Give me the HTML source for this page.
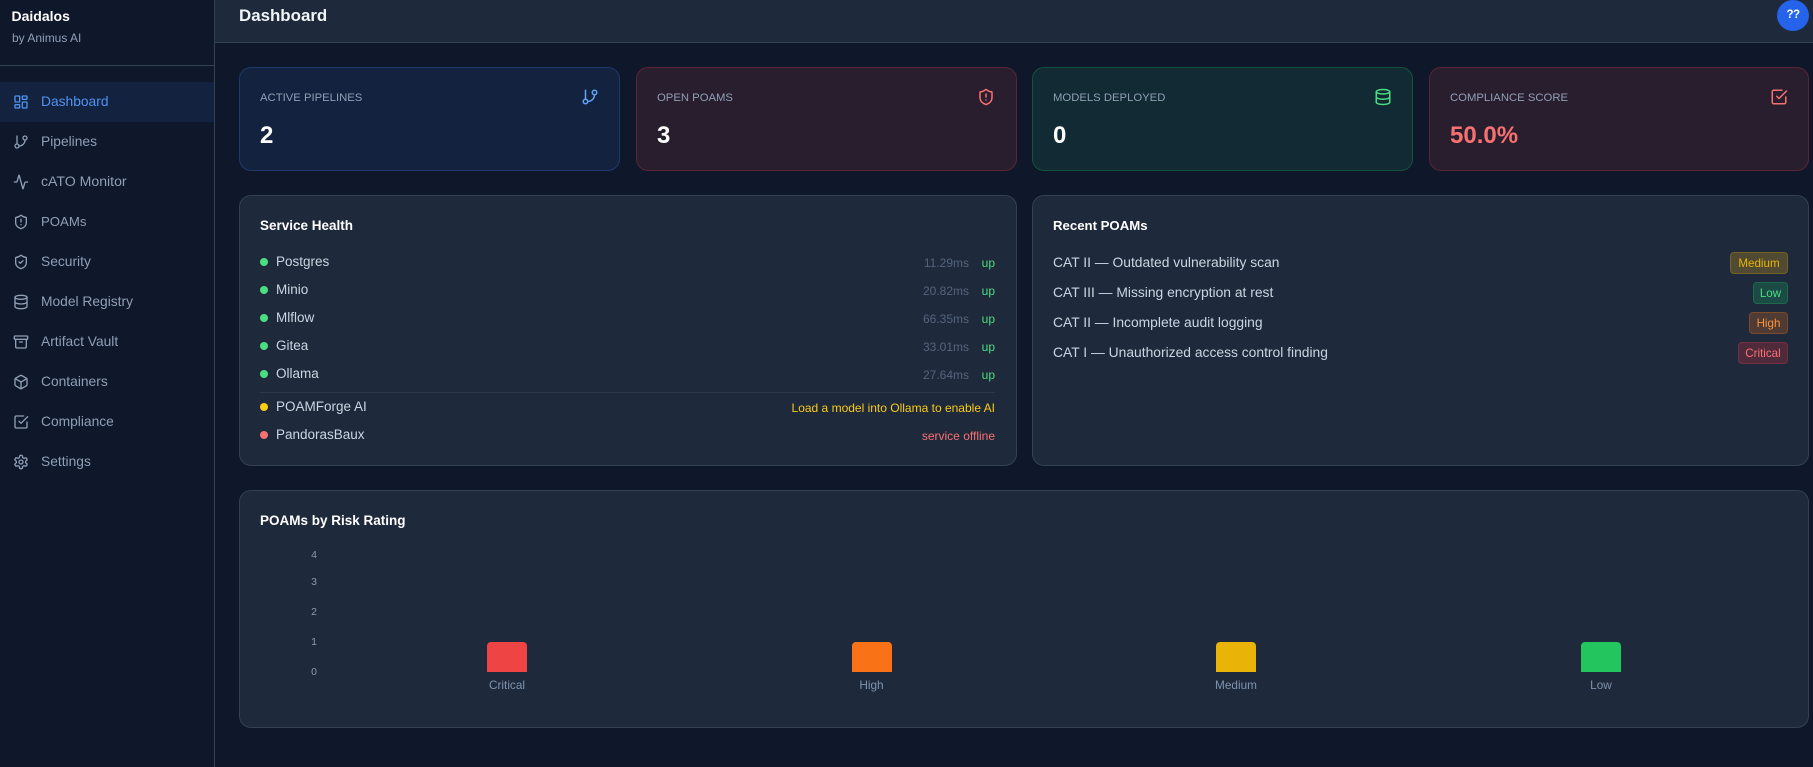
<!DOCTYPE html>
<html lang="en"><head><meta charset="utf-8"><title>Daidalos Dashboard</title>
<style>
*{box-sizing:border-box;margin:0;padding:0}
html,body{width:1813px;height:767px;overflow:hidden;background:#0f172a;font-family:"Liberation Sans",Arial,sans-serif}
.a{position:absolute;white-space:nowrap}
.t{position:absolute;white-space:nowrap;line-height:20px;height:20px}
svg{position:absolute;fill:none;stroke:currentColor;stroke-width:2;stroke-linecap:round;stroke-linejoin:round}
.sb{position:absolute;left:0;top:0;width:215px;height:767px;background:#0f172a;border-right:1px solid #334155}
.nav{position:absolute;left:0;width:214px;height:40px;color:#8f9fb6}
.nav .l{position:absolute;left:41px;top:10px;font-size:13.8px;line-height:20px}
.nav svg{left:13px;top:12px}
.nav.on{background:#13233f;color:#4f92f0}
.card{position:absolute;border-radius:12px;border:1px solid #334155;background:#1e293b}
.s{top:67px;height:104px;width:381px}
.s .lb{position:absolute;left:20px;top:20px;font-size:11.3px;line-height:20px;color:#8f9fb6;white-space:nowrap}
.s .v{position:absolute;left:20px;top:52px;font-size:24px;line-height:32px;font-weight:700;color:#fff}
.s svg{left:341px;top:20px}
.h3{font-size:13.5px;font-weight:700;color:#fff}
.dot{position:absolute;width:8px;height:8px;border-radius:50%;left:260px}
.nm{font-size:13.5px;color:#cbd5e1;left:276px}
.ms{font-size:12px;color:#55647d;right:844px}
.up{font-size:12px;color:#4ade80;right:818px}
.rp{font-size:13.85px;color:#cbd5e1;left:1053px}
.b{position:absolute;left:auto;right:25px;height:22px;border-radius:4px;border:1px solid;font-size:11.6px;line-height:22px;text-align:center;white-space:nowrap}
.bar{position:absolute;top:642px;width:40px;height:30px;border-radius:4px 4px 0 0}
.tk{position:absolute;font-size:10.5px;line-height:14px;color:#8a9bb3;width:12px;text-align:center;left:308px}
.xl{position:absolute;top:678px;font-size:11.8px;line-height:14px;color:#7f93ad;width:100px;text-align:center}
</style></head><body>

<div class="a" style="left:215px;top:0;width:1598px;height:43px;background:#1e293b;border-bottom:1px solid #334155"></div>
<div class="t" style="left:239px;top:5px;font-size:16.9px;line-height:22px;height:22px;font-weight:700;color:#f1f5f9">Dashboard</div>
<div class="a" style="left:1777px;top:0;width:32px;height:31px;border-radius:50%;background:#2563eb;color:#fff;font-size:11.5px;font-weight:700;line-height:31px;text-align:center;letter-spacing:-.5px">??</div>

<div class="sb">
<div class="a" style="left:0;top:65px;width:214px;height:1px;background:#334155"></div>
<div class="t" style="left:11.5px;top:6px;font-size:14px;font-weight:700;color:#fff">Daidalos</div>
<div class="t" style="left:12px;top:28px;font-size:12px;color:#8f9fb6">by Animus AI</div>

<div class="nav on" style="top:82px"><svg width="16" height="16" viewBox="0 0 24 24"><rect x="3" y="3" width="7" height="9" rx="1"/><rect x="14" y="3" width="7" height="5" rx="1"/><rect x="14" y="12" width="7" height="9" rx="1"/><rect x="3" y="16" width="7" height="5" rx="1"/></svg><span class="l">Dashboard</span></div>
<div class="nav" style="top:122px"><svg width="16" height="16" viewBox="0 0 24 24"><line x1="6" y1="3" x2="6" y2="15"/><circle cx="18" cy="6" r="3"/><circle cx="6" cy="18" r="3"/><path d="M18 9a9 9 0 0 1-9 9"/></svg><span class="l">Pipelines</span></div>
<div class="nav" style="top:162px"><svg width="16" height="16" viewBox="0 0 24 24"><path d="M22 12h-2.48a2 2 0 0 0-1.93 1.46l-2.35 8.36a.25.25 0 0 1-.48 0L9.24 2.18a.25.25 0 0 0-.48 0l-2.35 8.36A2 2 0 0 1 4.49 12H2"/></svg><span class="l" style="font-size:14.1px;top:9px">cATO Monitor</span></div>
<div class="nav" style="top:202px"><svg width="16" height="16" viewBox="0 0 24 24"><path d="M20 13c0 5-3.5 7.5-7.66 8.95a1 1 0 0 1-.67-.01C7.5 20.5 4 18 4 13V6a1 1 0 0 1 1-1c2 0 4.5-1.2 6.24-2.72a1.17 1.17 0 0 1 1.52 0C14.51 3.81 17 5 19 5a1 1 0 0 1 1 1z"/><path d="M12 8v4"/><path d="M12 16h.01"/></svg><span class="l" style="font-size:13.2px">POAMs</span></div>
<div class="nav" style="top:242px"><svg width="16" height="16" viewBox="0 0 24 24"><path d="M20 13c0 5-3.5 7.5-7.66 8.95a1 1 0 0 1-.67-.01C7.5 20.5 4 18 4 13V6a1 1 0 0 1 1-1c2 0 4.5-1.2 6.24-2.72a1.17 1.17 0 0 1 1.52 0C14.51 3.81 17 5 19 5a1 1 0 0 1 1 1z"/><path d="m9 12 2 2 4-4"/></svg><span class="l">Security</span></div>
<div class="nav" style="top:282px"><svg width="16" height="16" viewBox="0 0 24 24"><ellipse cx="12" cy="5" rx="9" ry="3"/><path d="M3 5V19A9 3 0 0 0 21 19V5"/><path d="M3 12A9 3 0 0 0 21 12"/></svg><span class="l">Model Registry</span></div>
<div class="nav" style="top:322px"><svg width="16" height="16" viewBox="0 0 24 24"><rect x="2" y="3" width="20" height="5" rx="1"/><path d="M4 8v11a2 2 0 0 0 2 2h12a2 2 0 0 0 2-2V8"/><path d="M10 12h4"/></svg><span class="l">Artifact Vault</span></div>
<div class="nav" style="top:362px"><svg width="16" height="16" viewBox="0 0 24 24"><path d="M21 8a2 2 0 0 0-1-1.73l-7-4a2 2 0 0 0-2 0l-7 4A2 2 0 0 0 3 8v8a2 2 0 0 0 1 1.73l7 4a2 2 0 0 0 2 0l7-4A2 2 0 0 0 21 16Z"/><path d="m3.3 7 8.7 5 8.7-5"/><path d="M12 22V12"/></svg><span class="l">Containers</span></div>
<div class="nav" style="top:402px"><svg width="16" height="16" viewBox="0 0 24 24"><path d="m9 11 3 3L22 4"/><path d="M21 12v7a2 2 0 0 1-2 2H5a2 2 0 0 1-2-2V5a2 2 0 0 1 2-2h11"/></svg><span class="l">Compliance</span></div>
<div class="nav" style="top:442px"><svg width="16" height="16" viewBox="0 0 24 24"><path d="M12.22 2h-.44a2 2 0 0 0-2 2v.18a2 2 0 0 1-1 1.73l-.43.25a2 2 0 0 1-2 0l-.15-.08a2 2 0 0 0-2.73.73l-.22.38a2 2 0 0 0 .73 2.73l.15.1a2 2 0 0 1 1 1.72v.51a2 2 0 0 1-1 1.74l-.15.09a2 2 0 0 0-.73 2.73l.22.38a2 2 0 0 0 2.73.73l.15-.08a2 2 0 0 1 2 0l.43.25a2 2 0 0 1 1 1.73V20a2 2 0 0 0 2 2h.44a2 2 0 0 0 2-2v-.18a2 2 0 0 1 1-1.73l.43-.25a2 2 0 0 1 2 0l.15.08a2 2 0 0 0 2.73-.73l.22-.39a2 2 0 0 0-.73-2.73l-.15-.08a2 2 0 0 1-1-1.74v-.5a2 2 0 0 1 1-1.74l.15-.09a2 2 0 0 0 .73-2.73l-.22-.38a2 2 0 0 0-2.73-.73l-.15.08a2 2 0 0 1-2 0l-.43-.25a2 2 0 0 1-1-1.73V4a2 2 0 0 0-2-2z"/><circle cx="12" cy="12" r="3"/></svg><span class="l">Settings</span></div>
</div>

<div class="card s" style="left:239px;background:#13233f;border-color:#1e3a6b">
<div class="lb">ACTIVE PIPELINES</div><div class="v">2</div>
<svg style="color:#60a5fa" width="18" height="18" viewBox="0 0 24 24"><line x1="6" y1="3" x2="6" y2="15"/><circle cx="18" cy="6" r="3"/><circle cx="6" cy="18" r="3"/><path d="M18 9a9 9 0 0 1-9 9"/></svg>
</div>
<div class="card s" style="left:636px;background:#291e2e;border-color:#5b2533">
<div class="lb">OPEN POAMS</div><div class="v">3</div>
<svg style="color:#f87171;left:340px" width="18" height="18" viewBox="0 0 24 24"><path d="M20 13c0 5-3.5 7.5-7.66 8.95a1 1 0 0 1-.67-.01C7.5 20.5 4 18 4 13V6a1 1 0 0 1 1-1c2 0 4.5-1.2 6.24-2.72a1.17 1.17 0 0 1 1.52 0C14.51 3.81 17 5 19 5a1 1 0 0 1 1 1z"/><path d="M12 8v4"/><path d="M12 16h.01"/></svg>
</div>
<div class="card s" style="left:1032px;background:#122a33;border-color:#14523e">
<div class="lb">MODELS DEPLOYED</div><div class="v">0</div>
<svg style="color:#4ade80;left:341px" width="18" height="18" viewBox="0 0 24 24"><ellipse cx="12" cy="5" rx="9" ry="3"/><path d="M3 5V19A9 3 0 0 0 21 19V5"/><path d="M3 12A9 3 0 0 0 21 12"/></svg>
</div>
<div class="card s" style="left:1429px;width:380px;background:#291e2e;border-color:#5b2533">
<div class="lb">COMPLIANCE SCORE</div><div class="v" style="color:#f87171">50.0%</div>
<svg style="color:#f87171;left:340px" width="18" height="18" viewBox="0 0 24 24"><path d="m9 11 3 3L22 4"/><path d="M21 12v7a2 2 0 0 1-2 2H5a2 2 0 0 1-2-2V5a2 2 0 0 1 2-2h11"/></svg>
</div>

<div class="card" style="left:239px;top:195px;width:778px;height:271px"></div>
<div class="t h3" style="left:260px;top:216px">Service Health</div>
<div class="dot" style="top:258px;background:#4ade80"></div><div class="t nm" style="top:252px">Postgres</div><div class="t ms" style="top:253px">11.29ms</div><div class="t up" style="top:253px">up</div>
<div class="dot" style="top:286px;background:#4ade80"></div><div class="t nm" style="top:280px">Minio</div><div class="t ms" style="top:281px">20.82ms</div><div class="t up" style="top:281px">up</div>
<div class="dot" style="top:314px;background:#4ade80"></div><div class="t nm" style="top:308px">Mlflow</div><div class="t ms" style="top:309px">66.35ms</div><div class="t up" style="top:309px">up</div>
<div class="dot" style="top:342px;background:#4ade80"></div><div class="t nm" style="top:336px">Gitea</div><div class="t ms" style="top:337px">33.01ms</div><div class="t up" style="top:337px">up</div>
<div class="dot" style="top:370px;background:#4ade80"></div><div class="t nm" style="top:364px">Ollama</div><div class="t ms" style="top:365px">27.64ms</div><div class="t up" style="top:365px">up</div>
<div class="a" style="left:260px;top:392px;width:735px;height:1px;background:#2c394c"></div>
<div class="dot" style="top:403px;background:#facc15"></div><div class="t nm" style="top:397px">POAMForge AI</div><div class="t" style="top:398px;right:818px;font-size:12px;color:#facc15">Load a model into Ollama to enable AI</div>
<div class="dot" style="top:431px;background:#f87171"></div><div class="t nm" style="top:425px">PandorasBaux</div><div class="t" style="top:426px;right:818px;font-size:12px;color:#f87171">service offline</div>

<div class="card" style="left:1032px;top:195px;width:777px;height:271px"></div>
<div class="t h3" style="left:1053px;top:216px;font-size:13.2px">Recent POAMs</div>
<div class="t rp" style="top:252px">CAT II — Outdated vulnerability scan</div>
<div class="t rp" style="top:282px">CAT III — Missing encryption at rest</div>
<div class="t rp" style="top:312px">CAT II — Incomplete audit logging</div>
<div class="t rp" style="top:342px">CAT I — Unauthorized access control finding</div>
<div class="b" style="top:252px;width:58px;color:#eab308;background:#4f4a31;border-color:#746322">Medium</div>
<div class="b" style="top:282px;width:35px;color:#4ade80;background:#1c4a45;border-color:#1e6a4a">Low</div>
<div class="b" style="top:312px;width:39px;color:#fb923c;background:#4f3b33;border-color:#7a4a2a">High</div>
<div class="b" style="top:342px;width:50px;color:#f87171;background:#4f2a3b;border-color:#743042">Critical</div>

<div class="card" style="left:239px;top:490px;width:1570px;height:238px"></div>
<div class="t h3" style="left:260px;top:511px">POAMs by Risk Rating</div>
<div class="tk" style="top:548px">4</div>
<div class="tk" style="top:575px">3</div>
<div class="tk" style="top:605px">2</div>
<div class="tk" style="top:635px">1</div>
<div class="tk" style="top:665px">0</div>
<div class="bar" style="left:487px;background:#ef4444"></div>
<div class="bar" style="left:851.5px;background:#f97316"></div>
<div class="bar" style="left:1216px;background:#eab308"></div>
<div class="bar" style="left:1581px;background:#22c55e"></div>
<div class="xl" style="left:457px">Critical</div>
<div class="xl" style="left:821.5px">High</div>
<div class="xl" style="left:1186px">Medium</div>
<div class="xl" style="left:1551px">Low</div>
</body></html>
